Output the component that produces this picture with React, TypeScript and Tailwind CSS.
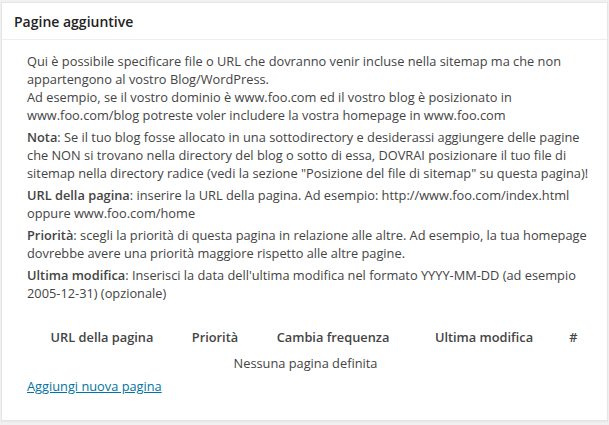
import React from 'react';

const font = { fontFamily: '"Open Sans", "Noto Sans", sans-serif' };

export default function App() {
  return (
    <div className="min-h-[425px] bg-[#f1f1f1] pt-[2px] pl-[1px] pr-[1px]" style={font}>
      <div className="border border-[#e5e5e5] bg-white shadow-[0_1px_1px_rgba(0,0,0,0.04)]">
        <h3 className="border-b border-[#eeeeee] px-3 pt-[9px] pb-[7px] text-[14px] font-semibold leading-[1.4] text-[#222]">
          Pagine aggiuntive
        </h3>
        <div className="pl-[25px] pr-[15px] pt-3 pb-[25px] text-[12.8px] leading-[18px] text-[#444]">
          <p className="mb-[4px]">
            Qui è possibile specificare file o URL che dovranno venir incluse nella sitemap ma che non appartengono al vostro Blog/WordPress.
            <br />
            Ad esempio, se il vostro dominio è www.foo.com ed il vostro blog è posizionato in www.foo.com/blog potreste voler includere la vostra homepage in www.foo.com
          </p>
          <p className="mb-[4px]">
            <b className="font-semibold">Nota</b>: Se il tuo blog fosse allocato in una sottodirectory e desiderassi aggiungere delle pagine che NON si trovano nella directory del blog o sotto di essa, DOVRAI posizionare il tuo file di sitemap nella directory radice (vedi la sezione "Posizione del file di sitemap" su questa pagina)!
          </p>
          <p className="mb-[4px]">
            <b className="font-semibold">URL della pagina</b>: inserire la URL della pagina. Ad esempio: http://www.foo.com/index.html oppure www.foo.com/home
          </p>
          <p className="mb-[4px]">
            <b className="font-semibold">Priorità</b>: scegli la priorità di questa pagina in relazione alle altre. Ad esempio, la tua homepage dovrebbe avere una priorità maggiore rispetto alle altre pagine.
          </p>
          <p>
            <b className="font-semibold">Ultima modifica</b>: Inserisci la data dell'ultima modifica nel formato YYYY-MM-DD (ad esempio 2005-12-31) (opzionale)
          </p>

          <table className="mt-[22px] w-full table-fixed border-collapse">
            <thead>
              <tr>
                <th className="w-[150px] py-1 font-semibold">URL della pagina</th>
                <th className="w-[76px] py-1 font-semibold">Priorità</th>
                <th className="w-[160px] py-1 font-semibold">Cambia frequenza</th>
                <th className="w-[142px] py-1 font-semibold">Ultima modifica</th>
                <th className="py-1 font-semibold">#</th>
              </tr>
            </thead>
            <tbody>
              <tr>
                <td colSpan={5} className="pt-[4px] pb-[2px] pr-[8px] text-center">
                  Nessuna pagina definita
                </td>
              </tr>
            </tbody>
          </table>

          <a href="#" className="mt-[3px] inline-block text-[#0074a2] underline">
            Aggiungi nuova pagina
          </a>
        </div>
      </div>
    </div>
  );
}
